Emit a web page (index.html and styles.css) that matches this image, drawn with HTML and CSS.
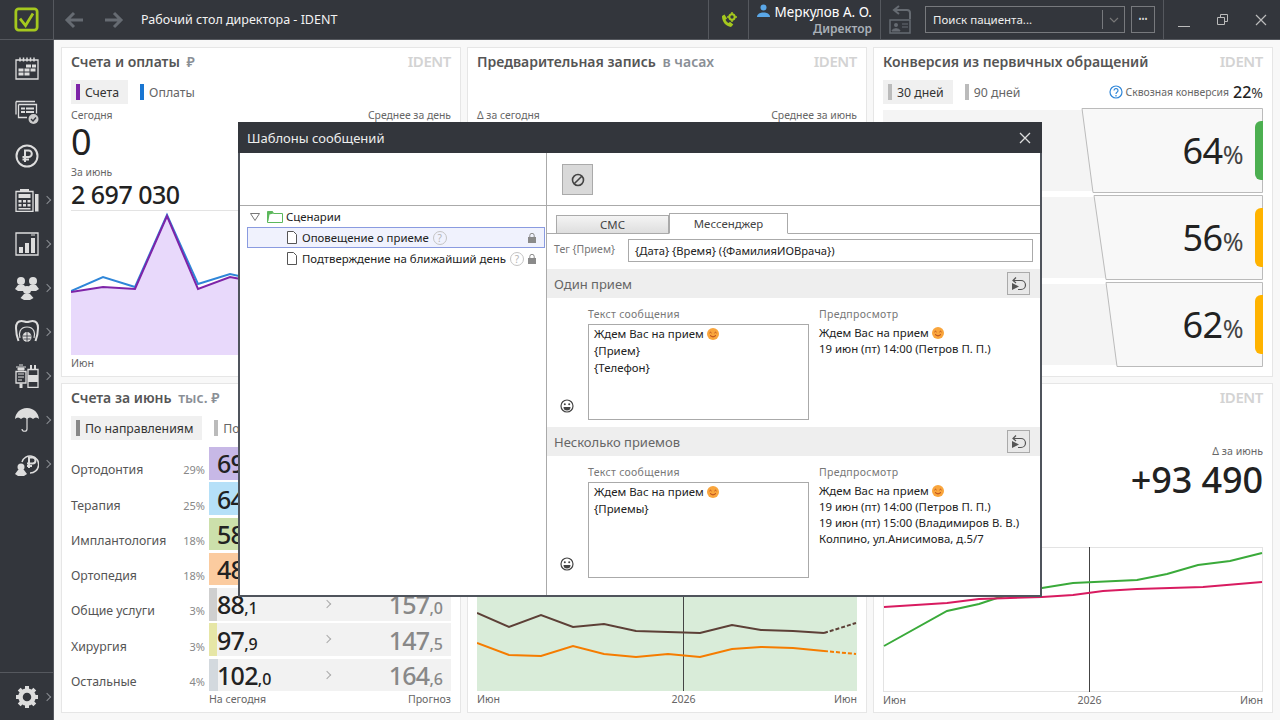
FILE: index.html
```html
<!DOCTYPE html>
<html lang="ru">
<head>
    <meta charset="UTF-8">
    <title>Рабочий стол директора - IDENT</title>
    <link rel="stylesheet" href="styles.css">
</head>
<body>
<div class="app">
    <header class="topbar">
        <div class="logo">
            <svg width="25" height="25" viewBox="0 0 27 27"><rect x="2" y="2" width="23" height="23" rx="3" fill="none" stroke="#a5c81e" stroke-width="3"/><path d="M6.5 12.5l6 7.5 8-13" fill="none" stroke="#a5c81e" stroke-width="3"/></svg>
        </div>
        <div class="nav-arrows">
            <svg width="20" height="18" viewBox="0 0 20 18"><path d="M10 2L3 9l7 7M3 9h16" fill="none" stroke="#666b72" stroke-width="3"/></svg>
            <svg width="20" height="18" viewBox="0 0 20 18"><path d="M10 2l7 7-7 7M17 9H1" fill="none" stroke="#666b72" stroke-width="3"/></svg>
        </div>
        <div class="page-title">Рабочий стол директора - IDENT</div>
        <div class="top-cell phone-cell">
            <svg width="16" height="16" viewBox="0 0 16 16"><path d="M1 4l2.500-1.500 2.500 4-1.500 1.200c.7 1.500 1.700 2.600 3.200 3.400l1.300-1.300 3.300 2.600L10 15C5 14.500.8 9.500 1 4z" fill="#a5c81e"/><circle cx="11" cy="5" r="2.700" fill="none" stroke="#a5c81e" stroke-width="2"/><path d="M11 0v2M11 8v2M6 5h2M14 5h2" stroke="#a5c81e" stroke-width="1.500"/></svg>
        </div>
        <div class="top-cell user-cell">
            <div class="user-name">
                <svg width="13" height="13" viewBox="0 0 13 13"><circle cx="6.500" cy="3.500" r="3" fill="#5aa7e8"/><path d="M0 13c0-3 3-4 5-4.500h3c2 .5 5 1.500 5 4.500z" fill="#5aa7e8"/></svg>
                Меркулов А. О.
            </div>
            <div class="user-role">Директор</div>
        </div>
        <div class="card-back">
            <svg width="24" height="30" viewBox="0 0 24 30"><path d="M21 14V8q0-3-3-3H6M10 1L5 5l5 4" fill="none" stroke="#666b72" stroke-width="2"/><rect x="1" y="15" width="20" height="13" fill="none" stroke="#666b72" stroke-width="1.500"/><circle cx="7" cy="20" r="2" fill="#666b72"/><path d="M3 26c0-3 8-3 8 0zM13 19h6M13 22h6" fill="#666b72" stroke="#666b72"/></svg>
        </div>
        <div class="search-box">
            <span class="search-text">Поиск пациента...</span>
            <span class="search-arrow">
                <svg width="10" height="6" viewBox="0 0 10 6"><path d="M1 1l4 4 4-4" fill="none" stroke="#777" stroke-width="1.200"/></svg>
            </span>
        </div>
        <div class="more-button">•••</div>
        <div class="window-buttons">
            <svg width="12" height="14" viewBox="0 0 12 14"><path d="M0 13.500h12" stroke="#bbb" fill="none"/></svg>
            <svg width="11" height="11" viewBox="0 0 11 11"><path d="M.5 3.500h7v7H.5zM3.500 3.500V.5h7v7H8" stroke="#bbb" fill="none"/></svg>
            <svg width="12" height="12" viewBox="0 0 12 12"><path d="M1 1l10 10M11 1L1 11" stroke="#bbb" stroke-width="1.200" fill="none"/></svg>
        </div>
    </header>

    <div class="workspace">
        <aside class="sidebar">
            <div class="side-item">
                <svg width="24" height="24" viewBox="0 0 24 24" class="side-icon"><path d="M1 4h22v19H1z" fill="none" stroke="#ddd" stroke-width="1.300"/><path d="M5 1.500v4M8.500 1.500v4M12 1.500v4M15.500 1.500v4M19 1.500v4" stroke="#ddd" stroke-width="1.500"/><path d="M11 8.500h5v3h-5zM17 8.500h4v3h-4zM3.500 12.500h5v3h-5zM9.500 12.500h5v3h-5zM15.500 12.500h5v3h-5zM3.500 16.500h5v3h-5zM9.500 16.500h5v3h-5z" fill="#ddd"/></svg>
            </div>
            <div class="side-item">
                <svg width="24" height="24" viewBox="0 0 24 24" class="side-icon"><path d="M1 1.500h19M1 1.500v13" stroke="#ddd" fill="none" stroke-width="1.300"/><path d="M3.500 4.500h18v9M12 17.500H3.500v-13" stroke="#ddd" fill="none" stroke-width="1.300"/><path d="M6 7.500h4v2H6zM11 7.500h8v2h-8zM6 11h4v2H6zM11 11h8v2h-8z" fill="#ddd"/><circle cx="18.500" cy="19" r="5" fill="#ccc"/><path d="M16 19l2 2 3-3.500" stroke="#33363c" stroke-width="1.400" fill="none"/></svg>
            </div>
            <div class="side-item">
                <svg width="24" height="24" viewBox="0 0 24 24" class="side-icon"><circle cx="12" cy="12" r="10.500" fill="none" stroke="#ddd" stroke-width="2"/><path d="M10 18V6.500h3.500a3.300 3.300 0 0 1 0 6.600H7.500M7.500 15.500H14" fill="none" stroke="#ddd" stroke-width="2"/></svg>
            </div>
            <div class="side-item has-arrow">
                <svg width="24" height="24" viewBox="0 0 24 24" class="side-icon"><path d="M5 3V1h9v2" fill="#ddd"/><path d="M1 3.500h17v20H1z" fill="none" stroke="#ddd" stroke-width="1.300"/><path d="M3.500 6h12v4h-12zM3.500 12h3v2.500h-3zM8 12h3v2.500H8zM12.500 12h3v2.500h-3zM3.500 16h3v2.500h-3zM8 16h3v2.500H8zM12.500 16h3v2.500h-3zM3.500 20h12v1.500h-12zM20 6h3.500v17.500H20z" fill="#ddd"/></svg>
                <span class="chev"></span>
            </div>
            <div class="side-item has-arrow">
                <svg width="24" height="24" viewBox="0 0 24 24" class="side-icon"><path d="M1 1h22v22H1z" fill="none" stroke="#ddd" stroke-width="1.300"/><path d="M4 15h4v6H4zM10 11h4v10h-4zM16 6h4v15h-4z" fill="#ddd"/><path d="M16 3l4 0" stroke="#ddd"/></svg>
                <span class="chev"></span>
            </div>
            <div class="side-item has-arrow">
                <svg width="24" height="24" viewBox="0 0 24 24" class="side-icon"><g fill="#ddd"><circle cx="6" cy="5" r="4"/><path d="M0 13l3-4h6l3 4-3 2H3z"/><circle cx="18" cy="5" r="4"/><path d="M12 13l3-4h6l3 4-3 2h-6z"/><circle cx="12" cy="14" r="4"/><path d="M5.500 22l3.500-4h6l3.500 4-3.500 2H9z"/></g></svg>
                <span class="chev"></span>
            </div>
            <div class="side-item has-arrow">
                <svg width="24" height="24" viewBox="0 0 24 24" class="side-icon"><path d="M6.500 1C3 1 1 3.500 1 8c0 5 1 9 2.500 13M17.500 1C21 1 23 3.500 23 8c0 5-1 9-2.500 13M6.500 1c2 0 3.500 1 5.500 1s3.500-1 5.500-1" fill="none" stroke="#ddd" stroke-width="2"/><path d="M5 18c-1.500-4-.5-11 7-11s8.500 7 7 11" fill="none" stroke="#ddd" stroke-width="1.200"/><ellipse cx="12" cy="17" rx="4.500" ry="5" fill="#ddd"/><path d="M12 12v10M8 16h8M8.500 19h7" stroke="#33363c" stroke-width=".8"/></svg>
                <span class="chev"></span>
            </div>
            <div class="side-item has-arrow">
                <svg width="24" height="24" viewBox="0 0 24 24" class="side-icon"><path d="M1 3h10M4 1h4M3 4h6v2H3z" stroke="#ddd" fill="#ddd"/><path d="M1 7.500h10V19H1z" fill="none" stroke="#ddd" stroke-width="1.300"/><path d="M3 10h6M3 13h6M3 16h4" stroke="#ddd"/><path d="M4.500 19.500h3V24h-3z" fill="#ddd"/><path d="M15 1h2v4h-2zM19 1h2v4h-2z" fill="#ddd"/><path d="M13 5.500h10v18H13z" fill="none" stroke="#ddd" stroke-width="1.300"/><path d="M13 11h10v7H13z" fill="#ddd"/></svg>
                <span class="chev"></span>
            </div>
            <div class="side-item has-arrow">
                <svg width="24" height="24" viewBox="0 0 24 24" class="side-icon"><path d="M12 0C5 0 .5 5 0 11c2-2 4-2 6 0 2-2 4-2 6 0 2-2 4-2 6 0 2-2 4-2 6 0-.5-6-5-11-12-11z" fill="#ddd"/><path d="M12 10v11c0 3-5 3-5 0" fill="none" stroke="#ddd" stroke-width="1.200"/></svg>
                <span class="chev"></span>
            </div>
            <div class="side-item has-arrow">
                <svg width="24" height="24" viewBox="0 0 24 24" class="side-icon"><path d="M7 10a8.500 8.500 0 1 1 8 11" fill="none" stroke="#ddd" stroke-width="1.500"/><path d="M14 16V5.500h3.500a3 3 0 0 1 0 6H12M12 14h5" fill="none" stroke="#ddd" stroke-width="2"/><circle cx="6" cy="15" r="3.500" fill="#ddd"/><path d="M0 22l3-4h6l3 4-3 2H3z" fill="#ddd"/></svg>
                <span class="chev"></span>
            </div>
            <div class="side-item settings has-arrow">
                <svg width="24" height="24" viewBox="0 0 24 24" class="side-icon"><circle cx="12" cy="12" r="6.500" fill="none" stroke="#ddd" stroke-width="4.500"/><path d="M12 1v4M12 19v4M1 12h4M19 12h4M4.200 4.200l2.800 2.800M17 17l2.800 2.800M19.800 4.200L17 7M7 17l-2.800 2.800" stroke="#ddd" stroke-width="4"/></svg>
                <span class="chev"></span>
            </div>
        </aside>

        <main class="dashboard">
            <section class="card">
                <div class="card-head"><h2>Счета и оплаты <span class="unit">₽</span></h2><span class="brand">IDENT</span></div>
                <div class="tabs">
                    <div class="tab active"><i class="mark purple"></i>Счета</div>
                    <div class="tab"><i class="mark blue"></i>Оплаты</div>
                </div>
                <div class="label-row"><span>Сегодня</span><span>Среднее за день</span></div>
                <div class="big-zero">0</div>
                <div class="label-row month-label"><span>За июнь</span></div>
                <div class="month-sum">2 697 030</div>
                <div class="chart-box">
                    <svg width="380" height="144" viewBox="0 0 380 144">
                        <path d="M0 81L32 76 64 78 96 5 127 78 159 66 191 72 223 78 255 66 287 70 319 60 351 64 380 62V144H0z" fill="#e8d9fb"/>
                        <path d="M0 80L32 66 64 76 96 4 127 73 159 63 191 70 223 74 255 62 287 66 319 56 351 60 380 58" fill="none" stroke="#2f86d8" stroke-width="2"/>
                        <path d="M0 81L32 76 64 78 96 5 127 78 159 66 191 72 223 78 255 66 287 70 319 60 351 64 380 62" fill="none" stroke="#7e24a8" stroke-width="2"/>
                    </svg>
                </div>
                <div class="axis"><span>Июн</span><span>2026</span><span>Июн</span></div>
            </section>

            <section class="card">
                <div class="card-head"><h2>Предварительная запись <span class="unit">в часах</span></h2><span class="brand">IDENT</span></div>
                <div class="tabs"></div>
                <div class="label-row"><span>Δ за сегодня</span><span>Среднее за июнь</span></div>
            </section>

            <section class="card">
                <div class="card-head"><h2>Конверсия из первичных обращений</h2><span class="brand">IDENT</span></div>
                <div class="tabs conv-tabs">
                    <div class="tab active"><i class="mark grey"></i>30 дней</div>
                    <div class="tab"><i class="mark grey"></i>90 дней</div>
                    <div class="through">
                        <svg width="14" height="14" viewBox="0 0 14 14"><circle cx="7" cy="7" r="6" fill="none" stroke="#2f86d8" stroke-width="1.200"/><path d="M5 5.500a2 2 0 1 1 3 1.800c-.8.500-1 .8-1 1.700M7 10v1.500" fill="none" stroke="#2f86d8" stroke-width="1.200"/></svg>
                        <span>Сквозная конверсия</span> <b>22</b><em>%</em>
                    </div>
                </div>
                <div class="funnel">
                    <div class="funnel-row">
                        <svg width="380" height="85" viewBox="0 0 380 85"><rect y="2" width="215" height="81" fill="#f4f4f4"/><path d="M199 .5H379.500V84.500H210z" fill="#f8f8f8" stroke="#bbb"/></svg>
                        <div class="funnel-value">64<em>%</em></div>
                        <i class="pill green"></i>
                    </div>
                    <div class="funnel-row">
                        <svg width="380" height="85" viewBox="0 0 380 85"><rect y="2" width="228" height="81" fill="#f4f4f4"/><path d="M211 .5H379.500V84.500H223z" fill="#f8f8f8" stroke="#bbb"/></svg>
                        <div class="funnel-value">56<em>%</em></div>
                        <i class="pill amber"></i>
                    </div>
                    <div class="funnel-row">
                        <svg width="380" height="85" viewBox="0 0 380 85"><rect y="2" width="240" height="81" fill="#f4f4f4"/><path d="M223 .5H379.500V84.500H234z" fill="#f8f8f8" stroke="#bbb"/></svg>
                        <div class="funnel-value">62<em>%</em></div>
                        <i class="pill amber"></i>
                    </div>
                </div>
            </section>

            <section class="card">
                <div class="card-head"><h2>Счета за июнь <span class="unit">тыс. ₽</span></h2><span class="brand">IDENT</span></div>
                <div class="tabs">
                    <div class="tab active"><i class="mark dark"></i>По направлениям</div>
                    <div class="tab"><i class="mark grey"></i>По врачам</div>
                </div>
                <div class="bill-rows">
                    <div class="bill-row"><span class="bill-name">Ортодонтия</span><span class="bill-pct">29%</span>
                        <div class="bill-cell"><i class="bill-bar" style="width:60%;background:#c7b8e6"></i><span class="bill-val">69<small>,4</small></span><span class="bill-chev"></span><span class="bill-plan">120<small>,5</small></span></div></div>
                    <div class="bill-row"><span class="bill-name">Терапия</span><span class="bill-pct">25%</span>
                        <div class="bill-cell"><i class="bill-bar" style="width:55%;background:#b5e0f8"></i><span class="bill-val">64<small>,2</small></span><span class="bill-chev"></span><span class="bill-plan">111<small>,3</small></span></div></div>
                    <div class="bill-row"><span class="bill-name">Имплантология</span><span class="bill-pct">18%</span>
                        <div class="bill-cell"><i class="bill-bar" style="width:45%;background:#cce0ab"></i><span class="bill-val">58<small>,7</small></span><span class="bill-chev"></span><span class="bill-plan">101<small>,8</small></span></div></div>
                    <div class="bill-row"><span class="bill-name">Ортопедия</span><span class="bill-pct">18%</span>
                        <div class="bill-cell"><i class="bill-bar" style="width:45%;background:#fbcb9f"></i><span class="bill-val">48<small>,9</small></span><span class="bill-chev"></span><span class="bill-plan">84<small>,7</small></span></div></div>
                    <div class="bill-row"><span class="bill-name">Общие услуги</span><span class="bill-pct">3%</span>
                        <div class="bill-cell"><i class="bill-bar" style="width:8px;background:#cfcfcf"></i><span class="bill-val">88<small>,1</small></span><span class="bill-chev"></span><span class="bill-plan">157<small>,0</small></span></div></div>
                    <div class="bill-row"><span class="bill-name">Хирургия</span><span class="bill-pct">3%</span>
                        <div class="bill-cell"><i class="bill-bar" style="width:8px;background:#e6e6a6"></i><span class="bill-val">97<small>,9</small></span><span class="bill-chev"></span><span class="bill-plan">147<small>,5</small></span></div></div>
                    <div class="bill-row"><span class="bill-name">Остальные</span><span class="bill-pct">4%</span>
                        <div class="bill-cell"><i class="bill-bar" style="width:9px;background:#d3d9de"></i><span class="bill-val">102<small>,0</small></span><span class="bill-chev"></span><span class="bill-plan">164<small>,6</small></span></div></div>
                </div>
                <div class="bill-foot"><span>На сегодня</span><span>Прогноз</span></div>
            </section>

            <section class="card">
                <div class="card-head"><h2></h2><span class="brand">IDENT</span></div>
                <div class="chart-bottom green-chart">
                    <svg width="380" height="210" viewBox="0 0 380 210">
                        <rect width="380" height="210" fill="#d9ecd9"/>
                        <path d="M206.500 0V210" stroke="#444"/>
                        <path d="M0 132L32 146 64 134 96 146 127 143 159 150 191 151 223 152 255 144 284 149 316 150 347 152" fill="none" stroke="#5d4037" stroke-width="2"/>
                        <path d="M347 152L379 142" fill="none" stroke="#5d4037" stroke-width="2" stroke-dasharray="4 2"/>
                        <path d="M0 162L32 174 64 175 96 165 127 173 159 176 191 173 223 176 255 168 284 166 316 167 347 170" fill="none" stroke="#f57c00" stroke-width="2"/>
                        <path d="M347 170L379 173" fill="none" stroke="#f57c00" stroke-width="2" stroke-dasharray="4 2"/>
                    </svg>
                </div>
                <div class="axis"><span>Июн</span><span class="axis-mid">2026</span><span>Июн</span></div>
            </section>

            <section class="card">
                <div class="card-head"><h2></h2><span class="brand">IDENT</span></div>
                <div class="delta-block">
                    <div class="delta-label">Δ за июнь</div>
                    <div class="delta-value">+93 490</div>
                </div>
                <div class="chart-bottom line-chart">
                    <svg width="380" height="145" viewBox="0 0 380 145">
                        <rect x=".5" y=".5" width="379" height="144" fill="#fff" stroke="#e3e3e3"/>
                        <path d="M206.500 0V145" stroke="#444"/>
                        <path d="M1 99L64 64 96 57 114 51 159 41 190 36 254 33 284 27 315 18 347 14 379 6" fill="none" stroke="#3aaa3a" stroke-width="2"/>
                        <path d="M1 60L64 56 96 52 159 50 190 48 220 44 254 42 320 40 379 35" fill="none" stroke="#d81b60" stroke-width="2"/>
                    </svg>
                </div>
                <div class="axis"><span>Июн</span><span class="axis-mid">2026</span><span>Июн</span></div>
            </section>
        </main>
    </div>

    <!-- modal window -->
    <div class="modal">
        <div class="modal-head">
            <span>Шаблоны сообщений</span>
            <svg width="12" height="12" viewBox="0 0 12 12"><path d="M1 1l10 10M11 1L1 11" stroke="#ddd" stroke-width="1.300" fill="none"/></svg>
        </div>
        <div class="modal-body">
            <div class="tree-pane">
                <div class="toolbar"></div>
                <div class="tree-root">
                    <svg width="10" height="8" viewBox="0 0 10 8"><path d="M.5.5h9L5 7.500z" fill="none" stroke="#777"/></svg>
                    <svg width="16" height="12" viewBox="0 0 16 12"><path d="M.5.5h5l1 2h9v9H.5z" fill="#fff" stroke="#5cb85c"/><path d="M.5.500h5l1 2-4 1-1 6-1 2z" fill="#5cb85c"/></svg>
                    <span>Сценарии</span>
                </div>
                <div class="tree-item selected">
                    <svg width="10" height="13" viewBox="0 0 10 13"><path d="M.5.5h6l3 3v9h-9z" fill="#fff" stroke="#555"/></svg>
                    <span>Оповещение о приеме</span>
                    <span class="help">?</span>
                    <svg class="lock" width="8" height="10" viewBox="0 0 8 10"><path d="M0 4h8v6H0z" fill="#8a8a8a"/><path d="M1.800 4.500V2.500a2.200 2.200 0 0 1 4.400 0v2" fill="none" stroke="#8a8a8a"/></svg>
                </div>
                <div class="tree-item">
                    <svg width="10" height="13" viewBox="0 0 10 13"><path d="M.5.5h6l3 3v9h-9z" fill="#fff" stroke="#555"/></svg>
                    <span>Подтверждение на ближайший день</span>
                    <span class="help">?</span>
                    <svg class="lock" width="8" height="10" viewBox="0 0 8 10"><path d="M0 4h8v6H0z" fill="#8a8a8a"/><path d="M1.800 4.500V2.500a2.200 2.200 0 0 1 4.400 0v2" fill="none" stroke="#8a8a8a"/></svg>
                </div>
            </div>
            <div class="edit-pane">
                <div class="toolbar">
                    <div class="stop-button">
                        <svg width="14" height="14" viewBox="0 0 14 14"><circle cx="7" cy="7" r="5.500" fill="none" stroke="#444" stroke-width="1.600"/><path d="M3.200 10.800l7.600-7.600" stroke="#444" stroke-width="1.600"/></svg>
                    </div>
                </div>
                <div class="msg-tabs">
                    <div class="msg-tab">СМС</div>
                    <div class="msg-tab current">Мессенджер</div>
                </div>
                <div class="tag-row">
                    <span class="tag-label">Тег {Прием}</span>
                    <div class="tag-input">{Дата} {Время} ({ФамилияИОВрача})</div>
                </div>

                <div class="section-head">
                    <span>Один прием</span>
                    <div class="reset-button">
                        <svg width="17" height="16" viewBox="0 0 17 16"><path d="M3 4.500h8a4.500 4.500 0 0 1 0 9H8" fill="none" stroke="#555" stroke-width="1.200"/><path d="M6 1.500L3 4.500l3 2.500" fill="none" stroke="#555" stroke-width="1.200"/><path d="M2 7l7 3.500-7 3.500z" fill="#555"/></svg>
                    </div>
                </div>
                <div class="section-body">
                    <svg class="smile" width="14" height="14" viewBox="0 0 14 14"><circle cx="7" cy="7" r="6" fill="none" stroke="#444" stroke-width="1.200"/><circle cx="4.800" cy="5.300" r="1" fill="#444"/><circle cx="9.200" cy="5.300" r="1" fill="#444"/><path d="M3.500 8h7a3.500 3.500 0 0 1-7 0z" fill="#444"/></svg>
                    <div class="msg-col">
                        <div class="field-label">Текст сообщения</div>
                        <div class="msg-box">
                            <div>Ждем Вас на прием <svg class="emoji" width="12" height="12" viewBox="0 0 12 12"><circle cx="6" cy="6" r="6" fill="#f9a53c"/><path d="M2.500 5q1-1.500 2 0M7.500 5q1-1.500 2 0M3 7.500q3 3 6 0" fill="none" stroke="#b5471b"/></svg></div>
                            <div>{Прием}</div>
                            <div>{Телефон}</div>
                        </div>
                    </div>
                    <div class="preview-col">
                        <div class="field-label">Предпросмотр</div>
                        <div class="preview">
                            <div>Ждем Вас на прием <svg class="emoji" width="12" height="12" viewBox="0 0 12 12"><circle cx="6" cy="6" r="6" fill="#f9a53c"/><path d="M2.500 5q1-1.500 2 0M7.500 5q1-1.500 2 0M3 7.500q3 3 6 0" fill="none" stroke="#b5471b"/></svg></div>
                            <div>19 июн (пт) 14:00 (Петров П. П.)</div>
                        </div>
                    </div>
                </div>

                <div class="section-head">
                    <span>Несколько приемов</span>
                    <div class="reset-button">
                        <svg width="17" height="16" viewBox="0 0 17 16"><path d="M3 4.500h8a4.500 4.500 0 0 1 0 9H8" fill="none" stroke="#555" stroke-width="1.200"/><path d="M6 1.500L3 4.500l3 2.500" fill="none" stroke="#555" stroke-width="1.200"/><path d="M2 7l7 3.500-7 3.500z" fill="#555"/></svg>
                    </div>
                </div>
                <div class="section-body">
                    <svg class="smile" width="14" height="14" viewBox="0 0 14 14"><circle cx="7" cy="7" r="6" fill="none" stroke="#444" stroke-width="1.200"/><circle cx="4.800" cy="5.300" r="1" fill="#444"/><circle cx="9.200" cy="5.300" r="1" fill="#444"/><path d="M3.500 8h7a3.500 3.500 0 0 1-7 0z" fill="#444"/></svg>
                    <div class="msg-col">
                        <div class="field-label">Текст сообщения</div>
                        <div class="msg-box">
                            <div>Ждем Вас на прием <svg class="emoji" width="12" height="12" viewBox="0 0 12 12"><circle cx="6" cy="6" r="6" fill="#f9a53c"/><path d="M2.500 5q1-1.500 2 0M7.500 5q1-1.500 2 0M3 7.500q3 3 6 0" fill="none" stroke="#b5471b"/></svg></div>
                            <div>{Приемы}</div>
                        </div>
                    </div>
                    <div class="preview-col">
                        <div class="field-label">Предпросмотр</div>
                        <div class="preview">
                            <div>Ждем Вас на прием <svg class="emoji" width="12" height="12" viewBox="0 0 12 12"><circle cx="6" cy="6" r="6" fill="#f9a53c"/><path d="M2.500 5q1-1.500 2 0M7.500 5q1-1.500 2 0M3 7.500q3 3 6 0" fill="none" stroke="#b5471b"/></svg></div>
                            <div>19 июн (пт) 14:00 (Петров П. П.)</div>
                            <div>19 июн (пт) 15:00 (Владимиров В. В.)</div>
                            <div>Колпино, ул.Анисимова, д.5/7</div>
                        </div>
                    </div>
                </div>
            </div>
        </div>
    </div>
</div>
</body>
</html>
```
FILE: styles.css
```css
* {
    box-sizing: border-box;
}

body {
    margin: 0;
    font-family: "Noto Sans", "Open Sans", sans-serif;
    font-size: 12px;
    color: #222;
    overflow: hidden;
}

.app {
    position: relative;
    width: 1280px;
    height: 720px;
    display: flex;
    flex-direction: column;
    background: #f8f8f8;
}

/* top bar */
.topbar {
    height: 40px;
    flex: none;
    display: flex;
    align-items: stretch;
    background: #33363c;
    border-bottom: 1px solid #55585e;
    color: #fff;
}

.logo {
    width: 54px;
    display: flex;
    align-items: center;
    padding-left: 14px;
    border-right: 1px solid #55585e;
}

.nav-arrows {
    width: 87px;
    display: flex;
    align-items: center;
    gap: 20px;
    padding-left: 10px;
}

.page-title {
    width: 567px;
    line-height: 39px;
    font-size: 12.5px;
    color: #f2f2f2;
}

.top-cell {
    border-left: 1px solid #55585e;
}

.phone-cell {
    width: 40px;
    display: flex;
    align-items: center;
    justify-content: center;
}

.user-cell {
    width: 133px;
    padding: 3px 8px 0 8px;
    border-right: 1px solid #55585e;
    text-align: right;
}

.user-name {
    font-size: 13.5px;
    line-height: 18px;
    white-space: nowrap;
}

.user-name svg {
    margin-right: 1px;
}

.user-role {
    font-size: 12px;
    line-height: 15px;
    font-weight: 600;
    color: #a9b0b8;
}

.card-back {
    width: 44px;
    display: flex;
    align-items: center;
    padding-left: 8px;
}

.search-box {
    width: 200px;
    height: 27px;
    margin-top: 6px;
    display: flex;
    align-items: center;
    border: 1px solid #77797d;
}

.search-text {
    flex: 1;
    padding-left: 7px;
    font-size: 11.5px;
    color: #eee;
}

.search-arrow {
    width: 22px;
    height: 19px;
    display: flex;
    align-items: center;
    justify-content: center;
    border-left: 1px solid #77797d;
}

.more-button {
    width: 24px;
    height: 27px;
    margin: 6px 8px 0 6px;
    border: 1px solid #77797d;
    text-align: center;
    line-height: 24px;
    font-size: 8px;
    letter-spacing: 0;
    color: #ddd;
}

.window-buttons {
    flex: 1;
    display: flex;
    align-items: center;
    justify-content: space-between;
    padding: 0 13px 0 14px;
    border-left: 1px solid #55585e;
}

/* left menu */
.workspace {
    flex: 1;
    display: flex;
    min-height: 0;
}

.sidebar {
    width: 54px;
    flex: none;
    display: flex;
    flex-direction: column;
    padding-top: 6px;
    background: #33363c;
    border-right: 1px solid #55585e;
}

.side-item {
    height: 44px;
    display: flex;
    align-items: center;
    padding-left: 15px;
}

.side-icon {
    flex: none;
}

.chev {
    width: 6px;
    height: 6px;
    margin-left: 5px;
    border-top: 1.500px solid #8b8e93;
    border-right: 1.500px solid #8b8e93;
    transform: rotate(45deg);
}

.settings {
    margin-top: auto;
    height: 48px;
    border-top: 1px solid #55585e;
}

/* dashboard cards */
.dashboard {
    flex: 1;
    display: grid;
    grid-template-columns: repeat(3, 400px);
    grid-template-rows: repeat(2, 330px);
    gap: 6px;
    padding: 7px;
}

.card {
    display: flex;
    flex-direction: column;
    padding: 3px 9px 0;
    background: #fff;
    border: 1px solid #e6e6e6;
    overflow: hidden;
}

.card-head {
    height: 20px;
    display: flex;
    justify-content: space-between;
    align-items: center;
}

.card-head h2 {
    margin: 0;
    font-size: 14px;
    font-weight: 600;
    color: #555;
}

.unit {
    margin-left: 3px;
    font-size: 14px;
    color: #8a8f96;
}

.brand {
    font-size: 15px;
    font-weight: 600;
    color: #d3d3d3;
    letter-spacing: -0.4px;
}

.tabs {
    height: 24px;
    margin-top: 9px;
    flex: none;
    display: flex;
    gap: 7px;
}

.tab {
    display: flex;
    align-items: center;
    gap: 5px;
    padding: 0 9px 0 5px;
    font-size: 12.3px;
    color: #666;
}

.tab.active {
    background: #f0f0f0;
    color: #333;
}

.mark {
    width: 4px;
    height: 16px;
    background: #bbb;
}

.mark.purple {
    background: #7e24a8;
}

.mark.blue {
    background: #1976d2;
}

.mark.dark {
    background: #888;
}

.label-row {
    margin-top: 3px;
    display: flex;
    justify-content: space-between;
    line-height: 16px;
    font-size: 10.4px;
    color: #666;
}

.big-zero {
    font-size: 36px;
    line-height: 38px;
}

.month-sum {
    font-size: 25px;
    font-weight: 500;
    line-height: 28px;
    letter-spacing: -0.5px;
}

.chart-box {
    height: 145px;
    margin-top: 2px;
    flex: none;
    border-top: 1px solid #e3e3e3;
}

.chart-box svg,
.chart-bottom svg,
.funnel-row svg {
    display: block;
}

.axis {
    display: flex;
    justify-content: space-between;
    line-height: 16px;
    font-size: 10.6px;
    color: #666;
}

.axis-mid {
    margin-left: 33px;
}

/* conversion */
.conv-tabs .through {
    margin-left: auto;
    display: flex;
    align-items: center;
    gap: 3px;
    font-size: 10.4px;
    color: #666;
}

.through b {
    margin-left: 1px;
    font-size: 16px;
    font-weight: 500;
    color: #222;
}

.through em {
    margin-left: -3px;
    font-style: normal;
    font-size: 14px;
    color: #333;
}

.funnel {
    margin-top: 4px;
    display: flex;
    flex-direction: column;
    gap: 2px;
}

.funnel-row {
    height: 85px;
    display: grid;
}

.funnel-row > * {
    grid-area: 1 / 1;
}

.funnel-value {
    justify-self: end;
    align-self: center;
    margin-right: 20px;
    font-size: 36px;
    letter-spacing: -0.5px;
    color: #222;
}

.funnel-value em {
    font-style: normal;
    font-size: 25px;
    color: #444;
}

.pill {
    justify-self: end;
    align-self: center;
    width: 8px;
    height: 59px;
    border-radius: 6px 0 0 6px;
}

.pill.green {
    background: #4caf50;
}

.pill.amber {
    background: #ffb300;
}

/* bills table */
.bill-rows {
    margin-top: 7px;
    display: flex;
    flex-direction: column;
    gap: 2.800px;
}

.bill-row {
    height: 32.500px;
    display: grid;
    grid-template-columns: 108px 26px 242px;
    align-items: center;
}

.bill-name {
    padding-top: 13px;
    font-size: 12.300px;
    color: #555;
    white-space: nowrap;
}

.bill-pct {
    padding-top: 13px;
    text-align: right;
    font-size: 11px;
    color: #888;
}

.bill-cell {
    margin-left: 4px;
    height: 32.500px;
    width: 242px;
    display: flex;
    align-items: center;
    background: #f2f2f2;
    padding: 4px 8px 0;
    position: relative;
}

.bill-bar {
    position: absolute;
    left: 0;
    top: 0;
    bottom: 0;
}

.bill-val,
.bill-plan {
    position: relative;
    font-size: 25px;
    font-weight: 500;
    letter-spacing: -0.7px;
    line-height: 28px;
}

.bill-val small,
.bill-plan small {
    font-size: 16px;
    letter-spacing: 0;
}

.bill-plan {
    margin-left: auto;
    color: #888;
}

.bill-chev {
    position: absolute;
    left: 115px;
    top: 13px;
    width: 6px;
    height: 6px;
    border-top: 1px solid #aaa;
    border-right: 1px solid #aaa;
    transform: rotate(45deg);
}

.bill-foot {
    margin-left: 138px;
    display: flex;
    justify-content: space-between;
    line-height: 16px;
    font-size: 10.6px;
    color: #666;
}

/* bottom charts */
.chart-bottom {
    flex: none;
}

.green-chart {
    margin-top: 74px;
}

.line-chart {
    margin-top: 46px;
}

.delta-block {
    margin-top: 36px;
    text-align: right;
}

.delta-label {
    line-height: 16px;
    font-size: 10.6px;
    color: #666;
}

.delta-value {
    font-size: 36px;
    font-weight: 500;
    letter-spacing: -0.1px;
    line-height: 42px;
    color: #222;
}

/* modal */
.modal {
    position: absolute;
    left: 238px;
    top: 122px;
    width: 804px;
    height: 475px;
    display: flex;
    flex-direction: column;
    background: #fff;
    border: 2px solid #4f545c;
    border-top: 0;
}

.modal-head {
    height: 31px;
    flex: none;
    display: flex;
    align-items: center;
    justify-content: space-between;
    margin: 0 -2px;
    padding: 0 11px 0 9px;
    background: #33363c;
    font-size: 13px;
    color: #eee;
}

.modal-body {
    flex: 1;
    display: grid;
    grid-template-columns: 307px 1fr;
    min-height: 0;
}

.tree-pane {
    border-right: 1px solid #aaa;
}

.toolbar {
    height: 53px;
    border-bottom: 1px solid #aaa;
}

.edit-pane .toolbar {
    padding: 11px 15px;
}

.stop-button {
    width: 31px;
    height: 31px;
    display: flex;
    align-items: center;
    justify-content: center;
    background: #d9d9d9;
    border: 1px solid #aaa;
}

.tree-root {
    height: 21px;
    display: flex;
    align-items: center;
    gap: 6px;
    padding-left: 10px;
    font-size: 11.4px;
    color: #222;
}

.tree-root svg + svg {
    margin-left: 1px;
    margin-right: -3px;
}

.tree-item {
    height: 21px;
    margin: 0 1px 0 7px;
    display: flex;
    align-items: center;
    padding: 0 8px 0 39px;
    font-size: 11.4px;
    border: 1px solid transparent;
    color: #222;
    white-space: nowrap;
}

.tree-item > span:first-of-type {
    margin-left: 5px;
}

.tree-item.selected {
    background: #f0f2fd;
    border-color: #8a9be0;
}

.help {
    width: 14px;
    height: 14px;
    margin-left: 4px;
    border: 1px solid #c4c4c4;
    border-radius: 50%;
    text-align: center;
    line-height: 12px;
    font-size: 10px;
    color: #b5b5b5;
}

.lock {
    margin-left: auto;
}

.msg-tabs {
    height: 28px;
    display: flex;
    align-items: flex-end;
    padding-left: 9px;
    border-bottom: 1px solid #aaa;
}

.msg-tab {
    width: 113px;
    height: 19px;
    margin-bottom: -1px;
    border: 1px solid #aaa;
    background: linear-gradient(#f4f4f4, #dedede);
    text-align: center;
    line-height: 18px;
    font-size: 11.4px;
    color: #444;
}

.msg-tab.current {
    width: 119px;
    height: 21px;
    background: #fff;
    border-bottom-color: #fff;
    line-height: 20px;
}

.tag-row {
    height: 35px;
    display: flex;
    align-items: flex-start;
    padding: 5px 7px;
}

.tag-label {
    width: 74px;
    line-height: 21px;
    font-size: 10.5px;
    color: #777;
    white-space: nowrap;
}

.tag-input {
    flex: 1;
    height: 23px;
    padding-left: 6px;
    border: 1px solid #aaa;
    line-height: 22px;
    font-size: 11.200px;
    color: #222;
}

.section-head {
    height: 29px;
    display: flex;
    align-items: center;
    justify-content: space-between;
    padding: 0 10px 0 7px;
    background: #eee;
    font-size: 13px;
    color: #666;
}

.reset-button {
    width: 23px;
    height: 23px;
    display: flex;
    align-items: center;
    justify-content: center;
    border: 1px solid #aaa;
    background: #e8e8e8;
}

.section-body {
    height: 129px;
    display: grid;
    grid-template-columns: 41px 221px 1fr;
}

.smile {
    align-self: end;
    margin: 0 0 14px 13px;
}

.msg-col {
    padding-top: 8px;
}

.preview-col {
    padding: 8px 0 0 10px;
}

.field-label {
    line-height: 16px;
    font-size: 10.500px;
    letter-spacing: 0.3px;
    color: #777;
}

.msg-box {
    height: 96px;
    margin-top: 2px;
    padding: 0 5px;
    border: 1px solid #aaa;
    line-height: 17px;
    font-size: 11.400px;
    color: #222;
}

.preview {
    margin-top: 3px;
    line-height: 16px;
    font-size: 11.400px;
    color: #222;
    white-space: nowrap;
}

.emoji {
    vertical-align: -2px;
}
```
